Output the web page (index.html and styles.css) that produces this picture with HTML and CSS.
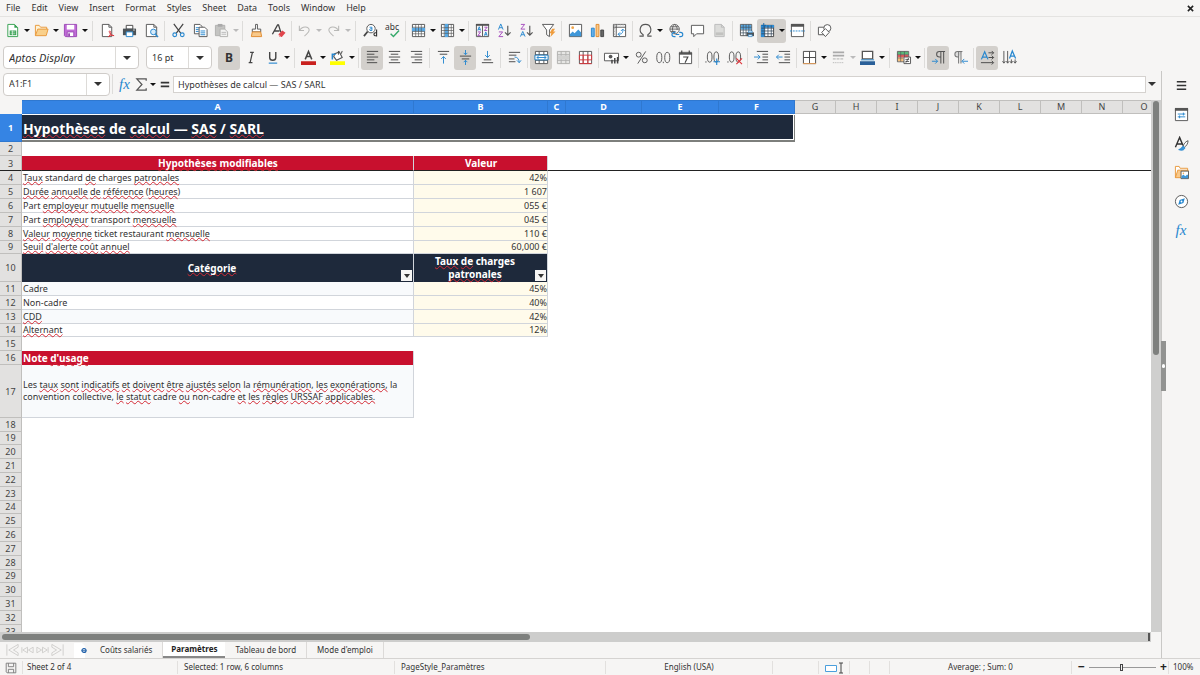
FILE: index.html
```html
<!DOCTYPE html>
<html lang="en">
<head>
<meta charset="utf-8">
<title>Paramètres</title>
<link rel="stylesheet" href="styles.css">
</head>
<body>
<nav class="menubar">
  <button>File</button><button>Edit</button><button>View</button><button>Insert</button><button>Format</button><button>Styles</button><button>Sheet</button><button>Data</button><button>Tools</button><button>Window</button><button>Help</button>
  <button class="close" aria-label="Close document"><svg class="x" viewBox="0 0 8 8"><path d="M1 1l6 6M7 1L1 7" stroke="#222" stroke-width="1.8"/></svg></button>
</nav>

<div class="toolbar top" role="toolbar" aria-label="Standard">
  <button class="tool split" aria-label="New"><svg viewBox="0 0 16 16"><path d="M3 1.500h7l3.500 3.500v9.500H3z" fill="#fff" stroke="#35a050"/><path d="M10 1v4h4" fill="#35a050"/><path d="M5 8h7v5H5z" fill="#35a050"/><path d="M6 9.500h5M6 11.500h5M8 8v5" stroke="#fff" stroke-width=".6"/></svg></button>
  <button class="tool split" aria-label="Open"><svg viewBox="0 0 16 16"><path d="M1.500 13.500v-11h4l1.500 2h6.500v3" fill="#fff3d6" stroke="#e8983a"/><path d="M1.500 13.500l2.500-7h11l-2 7z" fill="#f9d08b" stroke="#e8983a"/></svg></button>
  <button class="tool split" aria-label="Save"><svg viewBox="0 0 16 16"><path d="M1.500 1.500h13v13h-12l-1-1z" fill="#c06bd6" stroke="#9a48b4"/><path d="M4 2h8v5H4z" fill="#fff"/><path d="M4.500 9.500h7v5h-7z" fill="#fff" stroke="#9a48b4"/><path d="M6.500 11v3" stroke="#9a48b4" stroke-width="2"/></svg></button>
  <i class="sep wide"></i>
  <button class="tool" aria-label="Export as PDF"><svg viewBox="0 0 16 16"><path d="M2.500 1.500h7l3 3v10h-10z" fill="#fff" stroke="#555"/><path d="M9.500 1.500v3h3" fill="none" stroke="#555"/><path d="M9 15c3-3 3-6 1.500-6.500S10 13 15 13.500M9 15c1-2 3-2.500 6-1.500" fill="none" stroke="#d9343b"/></svg></button>
  <button class="tool" aria-label="Print"><svg viewBox="0 0 16 16"><path d="M4.500 2.500h7v4h-7z" fill="#fff" stroke="#444"/><path d="M1 6h14v7H1z" fill="#4d5357"/><path d="M4.500 9.500h7v5h-7z" fill="#fff" stroke="#2787cf"/><path d="M12 7.500h1.500" stroke="#fff"/></svg></button>
  <button class="tool" aria-label="Print preview"><svg viewBox="0 0 16 16"><path d="M2.500 1.500h8l3 3v10h-11z" fill="#fff" stroke="#555"/><path d="M10.500 1.500v3h3" fill="none" stroke="#555"/><circle cx="10" cy="9.500" r="3" fill="#d7ebfa" stroke="#2787cf"/><path d="M12 12l3 3" stroke="#2787cf" stroke-width="1.500"/></svg></button>
  <i class="sep"></i>
  <button class="tool" aria-label="Cut"><svg viewBox="0 0 16 16"><path d="M3 1l7.500 10M13 1L5.500 11" stroke="#444" stroke-width="1.300"/><circle cx="4" cy="12.500" r="2" fill="none" stroke="#2787cf" stroke-width="1.200"/><circle cx="12" cy="12.500" r="2" fill="none" stroke="#2787cf" stroke-width="1.200"/></svg></button>
  <button class="tool" aria-label="Copy"><svg viewBox="0 0 16 16"><path d="M1.500 1.500h6l2 2v8h-8z" fill="#fff" stroke="#555"/><path d="M3 5h4M3 7h3M3 9h3" stroke="#2787cf"/><path d="M6.500 4.500h6l2.500 2.500v7.500H6.500z" fill="#fff" stroke="#555"/><path d="M8 8.500h5M8 10.500h5M8 12.500h5" stroke="#2787cf"/></svg></button>
  <button class="tool split off" aria-label="Paste"><svg viewBox="0 0 16 16"><path d="M1.500 2.500h10v11h-10z" fill="#c4c4c2" stroke="#b0b0ae"/><path d="M4 1h5v3H4z" fill="#aaa"/><path d="M6.500 6.500h5l3 3v5h-8z" fill="#f3f3f2" stroke="#b0b0ae"/><path d="M8 10h5M8 12h5" stroke="#bbb"/></svg></button>
  <i class="sep"></i>
  <button class="tool" aria-label="Clone formatting"><svg viewBox="0 0 16 16"><path d="M7 1.500h2v5h3.500v3h-9v-3H7z" fill="#fff" stroke="#555"/><path d="M3.500 9.500h9l1 5h-11z" fill="#f8c98b" stroke="#e08a2c"/></svg></button>
  <button class="tool" aria-label="Clear formatting"><svg viewBox="0 0 16 16"><path d="M1.500 12L7 2h1l2.500 8M3.500 8.500H9" fill="none" stroke="#444" stroke-width="1.400"/><path d="M8 12l4-4 3.500 2.500-4 4.500H9z" fill="#e0454c"/><path d="M8 12l3 3H9z" fill="#f7b5b8"/></svg></button>
  <i class="sep"></i>
  <button class="tool split off" aria-label="Undo"><svg viewBox="0 0 16 16"><path d="M2.500 3v5h5M2.500 8c3-5 10-5 10.500-.5 0 3-3 4-5 6.500" fill="none" stroke="#b8b8b6" stroke-width="1.100"/></svg></button>
  <button class="tool split off" aria-label="Redo"><svg viewBox="0 0 16 16"><path d="M13.500 3v5h-5M13.500 8c-3-5-10-5-10.500-.5 0 3 3 4 5 6.500" fill="none" stroke="#b8b8b6" stroke-width="1.100"/></svg></button>
  <i class="sep wide"></i>
  <button class="tool" aria-label="Find and replace"><svg viewBox="0 0 16 16"><circle cx="8.500" cy="6" r="4.500" fill="#fff" stroke="#555"/><path d="M5 9l-4 5" stroke="#444" stroke-width="1.800"/><path d="M7 4.500h2.500v3.500H7.500c-1-1.500 0-2 2-2" fill="none" stroke="#2787cf"/><path d="M14.500 7v7.500M14.500 10.500c-3.500-1-4 4 0 3" fill="none" stroke="#333" stroke-width="1.200"/></svg></button>
  <button class="tool" aria-label="Spelling"><svg viewBox="0 0 16 16"><text x="0" y="7" class="abc">abc</text><path d="M6 11.500l3 3 6-6.500" fill="none" stroke="#35a96a" stroke-width="1.500"/></svg></button>
  <i class="sep"></i>
  <button class="tool split" aria-label="Row"><svg viewBox="0 0 16 16"><path d="M1.500 1.500h13v13h-13z" fill="#fff" stroke="#555"/><path d="M1 5h14v4H1z" fill="#59a9e4"/><path d="M5 1.500v13M8 1.500v13M11 1.500v13M1.500 11.500h13M1.500 4.500h13M1.500 9h13" stroke="#555" stroke-width=".7"/></svg></button>
  <button class="tool split" aria-label="Column"><svg viewBox="0 0 16 16"><path d="M1.500 1.500h13v13h-13z" fill="#fff" stroke="#555"/><path d="M5 1h4v14H5z" fill="#59a9e4"/><path d="M1.500 5h13M1.500 8h13M1.500 11h13M4.500 1.500v13M9 1.500v13M12 1.500v13" stroke="#555" stroke-width=".7"/></svg></button>
  <i class="sep"></i>
  <button class="tool" aria-label="Sort"><svg viewBox="0 0 16 16"><path d="M1 1h14v2H1z" fill="#444"/><path d="M1.500 1.500h13v13h-13zM8 2v12" fill="#fff" fill-opacity=".1" stroke="#555"/><path d="M3 8l1.500-4L6 8M3.500 7h2M10 13.500l1.500-4 1.500 4M10.500 12.500h2" fill="none" stroke="#2787cf"/><path d="M3 9.500h3l-3 4h3M10 4.500h3l-3 3.500h3" fill="none" stroke="#a44bbd"/></svg></button>
  <button class="tool" aria-label="Sort ascending"><svg viewBox="0 0 16 16"><path d="M1.500 7L4 1l2.500 6M2.500 5h3" fill="none" stroke="#2787cf"/><path d="M2 9.500h4l-4 5h4.500" fill="none" stroke="#a44bbd"/><path d="M11.500 3v10M8.500 10l3 3 3-3" fill="none" stroke="#555" stroke-width="1.200"/></svg></button>
  <button class="tool" aria-label="Sort descending"><svg viewBox="0 0 16 16"><path d="M1.500 14.500L4 9l2.500 5.500M2.500 12.500h3" fill="none" stroke="#2787cf"/><path d="M2 1.500h4l-4 5h4.500" fill="none" stroke="#a44bbd"/><path d="M11.500 3v10M8.500 10l3 3 3-3" fill="none" stroke="#555" stroke-width="1.200"/></svg></button>
  <button class="tool" aria-label="AutoFilter"><svg viewBox="0 0 16 16"><path d="M1.500 1.500h12l-4.500 6v7l-3-2v-5z" fill="#fff" stroke="#555"/><path d="M12 6h3l-2 3h2.500L10 15l1-4H9z" fill="#ef9c3c"/></svg></button>
  <i class="sep"></i>
  <button class="tool" aria-label="Insert image"><svg viewBox="0 0 16 16"><path d="M1.500 1.500h13v13h-13z" fill="#fff" stroke="#555"/><circle cx="5" cy="5" r="1.500" fill="#f0a54a"/><path d="M2 14v-2l3-3 2 2 4-4 3 3v4z" fill="#3f97d9"/></svg></button>
  <button class="tool" aria-label="Insert chart"><svg viewBox="0 0 16 16"><path d="M1.500 5.500h3v9h-3z" fill="#67b0e8" stroke="#2787cf"/><path d="M6.500 1.500h3v13h-3z" fill="#f9c98a" stroke="#e08a2c"/><path d="M11.500 7.500h3v7h-3z" fill="#666" stroke="#444"/></svg></button>
  <button class="tool" aria-label="Pivot table"><svg viewBox="0 0 16 16"><path d="M1.500 1.500h13v13h-13zM4.500 1.500v13M1.500 4.500h13" fill="#fff" stroke="#555"/><path d="M2 2h12M2.500 2v12" stroke="#aaa" stroke-dasharray="2 1"/><path d="M6.500 12c5 0 5-2 5-5M9.500 8.500l2-2 2 2M8.500 10l-2 2 2 2" fill="none" stroke="#2787cf"/></svg></button>
  <i class="sep"></i>
  <button class="tool split" aria-label="Special character"><svg viewBox="0 0 16 16"><path d="M1.500 14h4v-1.500C0 9 2 1.500 8 1.500s8 7.500 2.500 11V14h4" fill="none" stroke="#555" stroke-width="1.200"/></svg></button>
  <button class="tool" aria-label="Hyperlink"><svg viewBox="0 0 16 16"><path d="M7 1.500a5 5 0 1 0 .1 0zM2 6.500h10M3 4h8M3 9h5M7 1.500c-3 3-3 7 0 10M7 1.500c3 3 3 5 2.500 6" fill="none" stroke="#555" stroke-width=".9"/><path d="M8 10H6.500a2 2 0 0 0 0 4.500H8M12 10h1.500a2 2 0 0 1 0 4.500H12M8 12.300h4" fill="none" stroke="#2787cf" stroke-width="1.200"/></svg></button>
  <button class="tool" aria-label="Comment"><svg viewBox="0 0 16 16"><path d="M1.500 2.500h13v9H7l-3 3v-3H1.500z" fill="#fff" stroke="#555"/></svg></button>
  <button class="tool off" aria-label="Headers and footers"><svg viewBox="0 0 16 16"><path d="M3 1.500h7l3 3v10H3z" fill="#dcdcda" stroke="#bbb"/><path d="M4 10h8v3H4z" fill="#c2c2c0"/><path d="M10 1.500v3h3" fill="none" stroke="#bbb"/></svg></button>
  <i class="sep"></i>
  <button class="tool" aria-label="Define print area"><svg viewBox="0 0 16 16"><path d="M1.500 1.500h12v12h-12z" fill="#fff" stroke="#555"/><path d="M2 2h11v5H2z" fill="#59a9e4"/><path d="M4.500 1.500v12M7.500 1.500v12M10.500 1.500v12M1.500 4.500h12M1.500 7.500h12M1.500 10.500h12" stroke="#456" stroke-width=".8"/><path d="M8 10h8v4H8z" fill="#4d5357"/><path d="M10 8.500h4V10h-4zM10 12.500h4v2h-4z" fill="#fff" stroke="#2787cf" stroke-width=".7"/></svg></button>
  <button class="tool split on" aria-label="Freeze rows and columns"><svg viewBox="0 0 16 16"><path d="M1.500 2.500h13v12h-13z" fill="#fff" stroke="#444"/><path d="M1 2h14v3H1zM1 2h4v13H1z" fill="#2f8bd2"/><path d="M5 2.500v12M8.500 2.500v12M12 2.500v12M1.500 5.500h13M1.500 8.500h13M1.500 11.500h13" stroke="#345" stroke-width=".8"/><path d="M4 0v5M1.500 2.500h5" stroke="#1668aa"/></svg></button>
  <button class="tool" aria-label="Split window"><svg viewBox="0 0 16 16"><path d="M1.500 1.500h13v13h-13z" fill="#fff" stroke="#555"/><path d="M1 1h14v3H1z" fill="#555"/><path d="M0 8.500h16" stroke="#2787cf" stroke-dasharray="2 1"/></svg></button>
  <i class="sep"></i>
  <button class="tool" aria-label="Draw functions"><svg viewBox="0 0 16 16"><path d="M1.500 4.500h7v8h-7z" fill="#fff" stroke="#555"/><circle cx="11" cy="5.500" r="3.800" fill="#fff" stroke="#555"/><path d="M9 6l4 4-4 4.500-4-4.500z" fill="#fff" stroke="#555"/></svg></button>
</div>

<div class="toolbar" role="toolbar" aria-label="Formatting">
  <div class="combo font"><input value="Aptos Display" aria-label="Font name"><button aria-label="Choose font"></button></div>
  <div class="combo size"><input value="16 pt" aria-label="Font size"><button aria-label="Choose size"></button></div>
  <button class="tool on" aria-label="Bold"><b class="glyph">B</b></button>
  <button class="tool" aria-label="Italic"><svg viewBox="0 0 16 16"><path d="M6.500 2.500h4M5 13.500h4M9 2.500L6.500 13.500" stroke="#444" stroke-width="1.300"/></svg></button>
  <button class="tool split" aria-label="Underline"><svg viewBox="0 0 16 16"><path d="M5 2v6c0 4 6.500 4 6.500 0V2" fill="none" stroke="#444" stroke-width="1.500"/><path d="M4 14h9" stroke="#2787cf" stroke-width="1.200"/></svg></button>
  <i class="sep wide"></i>
  <button class="tool split" aria-label="Font color"><svg viewBox="0 0 16 16"><path d="M4.500 10L8 1.500 11.500 10M5.500 7h5" fill="none" stroke="#444" stroke-width="1.600"/><path d="M0 12h16v4H0z" fill="#c9211e"/></svg></button>
  <button class="tool split" aria-label="Background color"><svg viewBox="0 0 16 16"><path d="M5 4l5-2 3 6-6 3-3-4z" fill="#fff" stroke="#555" stroke-width="1.200"/><path d="M9 5V1M13 1l-1 3" stroke="#444"/><path d="M2.500 10V4.500H6" fill="none" stroke="#2787cf" stroke-width="1.600"/><path d="M0 12h16v4H0z" fill="#ff0"/></svg></button>
  <i class="sep"></i>
  <button class="tool on" aria-label="Align left"><svg viewBox="0 0 16 16"><path d="M2 1.500h12M2 4.500h8M2 7.500h12M2 10.500h8M2 13.500h11" stroke="#444"/></svg></button>
  <button class="tool" aria-label="Center"><svg viewBox="0 0 16 16"><path d="M2 1.500h12M4 4.500h8M2 7.500h12M4 10.500h8M2 13.500h12" stroke="#444"/></svg></button>
  <button class="tool" aria-label="Align right"><svg viewBox="0 0 16 16"><path d="M2 1.500h12M6 4.500h8M2 7.500h12M6 10.500h8M3 13.500h11" stroke="#444"/></svg></button>
  <i class="sep"></i>
  <button class="tool" aria-label="Align top"><svg viewBox="0 0 16 16"><path d="M2 1.500h12M4 4.500h8" stroke="#444"/><path d="M8 14.500V7M5.500 9.500L8 7l2.500 2.500" fill="none" stroke="#2787cf"/></svg></button>
  <button class="tool on" aria-label="Center vertically"><svg viewBox="0 0 16 16"><path d="M2 6.500h12M4 9.500h8" stroke="#444"/><path d="M8 0v5M6 3l2 2 2-2M8 16v-5M6 13l2-2 2 2" fill="none" stroke="#2787cf"/></svg></button>
  <button class="tool" aria-label="Align bottom"><svg viewBox="0 0 16 16"><path d="M4 10.500h8M2 13.500h12" stroke="#444"/><path d="M8 1v7M5.500 5.500L8 8l2.500-2.500" fill="none" stroke="#2787cf"/></svg></button>
  <i class="sep"></i>
  <button class="tool" aria-label="Wrap text"><svg viewBox="0 0 16 16"><path d="M2 2.500h12M2 5.500h8M2 9.500h6M2 12.500h7" stroke="#444"/><path d="M8 7.500c3 0 5 2 5 6M10.500 11l2.500 2.500 2-2.500" fill="none" stroke="#2787cf"/></svg></button>
  <i class="sep"></i>
  <button class="tool on" aria-label="Merge and center"><svg viewBox="0 0 16 16"><path d="M1.500 1.500h13v13h-13zM1.500 5h13M1.500 11h13M5.500 1.500v13M10.500 1.500v13" fill="#fff" stroke="#555"/><path d="M1 5.500h14v5H1z" fill="#fff" stroke="#1e7fc4"/><path d="M3 8h10M5 6.500L3 8l2 1.500M11 6.500L13 8l-2 1.500" fill="none" stroke="#2787cf"/></svg></button>
  <button class="tool off" aria-label="Merge cells"><svg viewBox="0 0 16 16"><path d="M1.500 1.500h13v13h-13zM1.500 5h13M1.500 11h13M5.500 1.500v13M10.500 1.500v13" fill="#e6e6e4" stroke="#b0b0ae"/><path d="M2 6h12v4H2z" fill="#d2d2d0"/></svg></button>
  <button class="tool" aria-label="Unmerge cells"><svg viewBox="0 0 16 16"><path d="M1.500 1.500h13v13h-13zM5.500 1.500v13M10.500 1.500v13" fill="#fff" stroke="#555"/><path d="M1.500 5.500h13v5h-13zM5.500 5.500v9M10.500 5.500v9M1.500 14.500h13" fill="none" stroke="#d9343b"/></svg></button>
  <i class="sep"></i>
  <button class="tool split" aria-label="Currency"><svg viewBox="0 0 16 16"><path d="M.5 3.500h15v8H.5z" fill="#fff" stroke="#555"/><circle cx="7" cy="7" r="2" fill="#555"/><path d="M8.500 10.500v4M11.500 8.500v6M14.500 7.500v7" stroke="#444" stroke-width="1.600"/></svg></button>
  <button class="tool" aria-label="Percent"><svg viewBox="0 0 16 16"><circle cx="5" cy="5" r="2.600" fill="none" stroke="#555"/><circle cx="11.500" cy="11" r="2.600" fill="none" stroke="#555"/><path d="M12.500 1.500L4 14.500" stroke="#555"/></svg></button>
  <button class="tool" aria-label="Number"><svg viewBox="0 0 16 16"><ellipse cx="3.500" cy="8" rx="2.700" ry="5.500" fill="none" stroke="#555"/><ellipse cx="12" cy="8" rx="2.700" ry="5.500" fill="none" stroke="#555"/><path d="M7.800 12.500v1.500" stroke="#555"/></svg></button>
  <button class="tool" aria-label="Date"><svg viewBox="0 0 16 16"><path d="M1.500 2.500h13v12h-13z" fill="#fff" stroke="#555"/><path d="M1 3h14v2H1z" fill="#555"/><path d="M4 .5v3M12 .5v3M5.500 7.500h5l-3 6" fill="none" stroke="#444" stroke-width="1.200"/></svg></button>
  <i class="sep"></i>
  <button class="tool" aria-label="Add decimal place"><svg viewBox="0 0 16 16"><ellipse cx="5" cy="7.500" rx="2.500" ry="5.500" fill="none" stroke="#555"/><ellipse cx="12" cy="7.500" rx="2.500" ry="5.500" fill="none" stroke="#555"/><path d="M1 12v1.500" stroke="#555"/><path d="M9 12.500h7M12.500 9v7" stroke="#2787cf" stroke-width="1.200"/></svg></button>
  <button class="tool" aria-label="Delete decimal place"><svg viewBox="0 0 16 16"><ellipse cx="5" cy="7.500" rx="2.500" ry="5.500" fill="none" stroke="#555"/><ellipse cx="12" cy="7.500" rx="2.500" ry="5.500" fill="none" stroke="#555"/><path d="M1 12v1.500" stroke="#555"/><path d="M10 9l6 6M16 9l-6 6" stroke="#e0343b" stroke-width="1.200"/></svg></button>
  <i class="sep"></i>
  <button class="tool" aria-label="Increase indent"><svg viewBox="0 0 16 16"><path d="M3 1.500h12M9 4.500h6M9 7.500h6M9 10.500h6M3 13.500h12" stroke="#444"/><path d="M0 7.500h6.500M4 5l2.500 2.500L4 10" fill="none" stroke="#2787cf"/></svg></button>
  <button class="tool" aria-label="Decrease indent"><svg viewBox="0 0 16 16"><path d="M3 1.500h12M9 4.500h6M9 7.500h6M9 10.500h6M3 13.500h12" stroke="#444"/><path d="M7 7.500H.5M3 5L.5 7.500 3 10" fill="none" stroke="#2787cf"/></svg></button>
  <i class="sep"></i>
  <button class="tool split" aria-label="Borders"><svg viewBox="0 0 16 16"><path d="M1.500 1.500h13v13h-13zM8 1.500v13M1.500 8h13" fill="#fff" stroke="#444"/><path d="M1 14.500h14" stroke="#e9a15a"/></svg></button>
  <button class="tool split off" aria-label="Border style"><svg viewBox="0 0 16 16"><path d="M2 2.500h12M2 6h12" stroke="#aaa" stroke-width="2"/><path d="M2 9.500h12" stroke="#aaa" stroke-dasharray="3 1"/><path d="M2 13.500h12" stroke="#aaa" stroke-dasharray="1 1"/></svg></button>
  <button class="tool split" aria-label="Border color"><svg viewBox="0 0 16 16"><path d="M2.500 1.500h11v8h-11z" fill="#fff" stroke="#555" stroke-width="1.400"/><path d="M1 10.500h14" stroke="#2787cf"/><path d="M0 12h16v4H0z" fill="#2a6099"/></svg></button>
  <i class="sep wide"></i>
  <button class="tool split" aria-label="Conditional formatting"><svg viewBox="0 0 16 16"><path d="M1.500 1.500h12v11h-12z" fill="#fff" stroke="#555"/><path d="M2 2h11v3H2z" fill="#58b978"/><path d="M2 5h11v3H2z" fill="#e8595e"/><path d="M2 8h6v4H2z" fill="#f6c07c"/><path d="M5 1.500v11M9 1.500v6M1.500 5h12M1.500 8.500h6" stroke="#555" stroke-width=".7"/><path d="M8.500 7.500h7v7h-7z" fill="#fff" stroke="#555"/><path d="M10 10h4M10 12.200h4M13.500 8.500l-3 5" stroke="#444" stroke-width=".9"/></svg></button>
  <i class="sep"></i>
  <button class="tool on" aria-label="Left to right"><svg viewBox="0 0 16 16"><path d="M10.500 14.500V1.500M13.500 14.500V1.500M15 1.500H9c-4 0-4 6 0 6h1.500" fill="none" stroke="#555" stroke-width="1.100"/><path d="M1 12h6M4.500 9.500L7 12l-2.500 2.500" fill="none" stroke="#2787cf"/></svg></button>
  <button class="tool" aria-label="Right to left"><svg viewBox="0 0 16 16"><path d="M6 14.500V1.500M8.500 14.500V1.500M10 1.500H5c-4 0-4 6 0 6h1" fill="#ddd" stroke="#777" stroke-width="1.100"/><path d="M16 12h-6M12 9.500L9.500 12l2.500 2.500" fill="none" stroke="#2787cf"/></svg></button>
  <i class="sep"></i>
  <button class="tool on" aria-label="Text direction left to right"><svg viewBox="0 0 16 16"><path d="M1.500 10L5 2l3.500 8M3 7.500h4.500" fill="none" stroke="#2787cf" stroke-width="1.300"/><path d="M9 3h5.500M9 8h5.500M1 13.500h13M12.500 1l2 2-2 2M12.500 6l2 2-2 2M12.500 11.500l2 2-2 2" fill="none" stroke="#444"/></svg></button>
  <button class="tool" aria-label="Text direction top to bottom"><svg viewBox="0 0 16 16"><path d="M8 9l3-8 3.500 8M9 6.500h4.500" fill="none" stroke="#2787cf" stroke-width="1.300"/><path d="M2 1v13M6 1v13M10 10v4M14 10v4M.5 12L2 14l1.500-2M4.500 12L6 14l1.500-2M8.500 12l1.500 2 1.500-2M12.500 12l1.500 2 1.500-2" fill="none" stroke="#555"/></svg></button>
</div>

<main class="work">
  <section class="doc">
    <div class="formula">
      <div class="combo name"><input value="A1:F1" aria-label="Name box"><button aria-label="Manage names"></button></div>
      <i class="sep"></i>
      <button class="tool fx" aria-label="Function wizard"><em>fx</em></button>
      <button class="tool split sigma" aria-label="Select function"><svg viewBox="0 0 16 16"><path d="M13 4V2H3l5.500 6L3 14h10v-2" fill="none" stroke="#555" stroke-width="1.300"/></svg></button>
      <button class="tool equals" aria-label="Formula"><svg viewBox="0 0 16 16"><path d="M4 6h9M4 10h9" stroke="#333" stroke-width="1.800"/></svg></button>
      <input class="content" value="Hypothèses de calcul — SAS / SARL" aria-label="Cell content">
      <button class="expand" aria-label="Expand formula bar"></button>
    </div>

    <div class="view">
      <div class="sheet">
        <table>
          <colgroup><col class="w-row"><col class="w-a"><col class="w-b"><col class="w-c"><col class="w-d"><col class="w-e"><col class="w-d"><col class="w"><col class="w"><col class="w"><col class="w"><col class="w"><col class="w"><col class="w"><col class="w"></colgroup>
          <thead><tr><th class="corner"></th><th class="sel">A</th><th class="sel">B</th><th class="sel">C</th><th class="sel">D</th><th class="sel">E</th><th class="sel">F</th><th>G</th><th>H</th><th>I</th><th>J</th><th>K</th><th>L</th><th>M</th><th>N</th><th>O</th></tr></thead>
          <tbody>
            <tr class="r-title"><th class="sel">1</th><td colspan="6" class="title"><span class="sp">Hypothèses</span> de <span class="sp">calcul</span> — <span class="sp">SAS</span> / <span class="sp">SARL</span></td><td colspan="9"></td></tr>
            <tr><th>2</th><td colspan="15"></td></tr>
            <tr class="frozen"><th>3</th><td class="red mid"><span class="sp">Hypothèses</span> <span class="sp">modifiables</span></td><td class="red mid">Valeur</td><td colspan="13"></td></tr>
            <tr><th>4</th><td class="c"><span class="sp">Taux</span> standard <span class="sp">de</span> charges <span class="sp">patronales</span></td><td class="v">42%</td></tr>
            <tr><th>5</th><td class="c"><span class="sp">Durée</span> <span class="sp">annuelle</span> <span class="sp">de</span> <span class="sp">référence</span> (<span class="sp">heures</span>)</td><td class="v">1 607</td></tr>
            <tr><th>6</th><td class="c">Part <span class="sp">employeur</span> <span class="sp">mutuelle</span> <span class="sp">mensuelle</span></td><td class="v">055 €</td></tr>
            <tr><th>7</th><td class="c">Part <span class="sp">employeur</span> transport <span class="sp">mensuelle</span></td><td class="v">045 €</td></tr>
            <tr><th>8</th><td class="c"><span class="sp">Valeur</span> <span class="sp">moyenne</span> ticket restaurant <span class="sp">mensuelle</span></td><td class="v">110 €</td></tr>
            <tr class="short"><th>9</th><td class="c"><span class="sp">Seuil</span> <span class="sp">d'alerte</span> <span class="sp">coût</span> <span class="sp">annuel</span></td><td class="v">60,000 €</td></tr>
            <tr class="r-head"><th>10</th><td class="navy mid"><span class="sp">Catégorie</span><button class="filter" aria-label="Filter Catégorie"></button></td><td class="navy mid"><span class="sp">Taux</span> <span class="sp">de</span> charges <span class="sp">patronales</span><button class="filter" aria-label="Filter Taux"></button></td></tr>
            <tr><th>11</th><td class="c tint">Cadre</td><td class="v">45%</td></tr>
            <tr><th>12</th><td class="c">Non-cadre</td><td class="v">40%</td></tr>
            <tr><th>13</th><td class="c tint"><span class="sp">CDD</span></td><td class="v">42%</td></tr>
            <tr class="short"><th>14</th><td class="c"><span class="sp">Alternant</span></td><td class="v">12%</td></tr>
            <tr><th>15</th><td></td></tr>
            <tr><th>16</th><td class="red">Note <span class="sp">d'usage</span></td></tr>
            <tr class="r-note"><th>17</th><td class="c tint note">Les <span class="sp">taux</span> <span class="sp">sont</span> <span class="sp">indicatifs</span> <span class="sp">et</span> <span class="sp">doivent</span> <span class="sp">être</span> <span class="sp">ajustés</span> <span class="sp">selon</span> la <span class="sp">rémunération</span>, <span class="sp">les</span> <span class="sp">exonérations,</span> la convention collective, <span class="sp">le</span> <span class="sp">statut</span> cadre <span class="sp">ou</span> non-cadre <span class="sp">et</span> <span class="sp">les</span> <span class="sp">règles</span> <span class="sp">URSSAF</span> <span class="sp">applicables.</span></td></tr>
            <tr><th>18</th><td></td></tr>
            <tr class="short"><th>19</th><td></td></tr>
            <tr><th>20</th><td></td></tr>
            <tr><th>21</th><td></td></tr>
            <tr><th>22</th><td></td></tr>
            <tr><th>23</th><td></td></tr>
            <tr class="short"><th>24</th><td></td></tr>
            <tr><th>25</th><td></td></tr>
            <tr><th>26</th><td></td></tr>
            <tr><th>27</th><td></td></tr>
            <tr><th>28</th><td></td></tr>
            <tr class="short"><th>29</th><td></td></tr>
            <tr><th>30</th><td></td></tr>
            <tr><th>31</th><td></td></tr>
            <tr><th>32</th><td></td></tr>
            <tr><th>33</th><td></td></tr>
          </tbody>
        </table>
      </div>
      <div class="vscroll"><div class="thumb"></div></div>
    </div>
    <div class="hscroll"><div class="track"><div class="thumb"></div><i class="grip"></i></div></div>

    <div class="tabs">
      <div class="nav">
        <button aria-label="First sheet"><svg viewBox="0 0 16 12"><path d="M2 0v12M14 0L4 6l10 6V9L9 6l5-3z" /></svg></button>
        <button aria-label="Previous sheet"><svg viewBox="0 0 16 12"><path d="M2 3v6M8 3L3 6l5 3zM14 3L9 6l5 3z"/></svg></button>
        <button aria-label="Next sheet"><svg viewBox="0 0 16 12"><path d="M14 3v6M2 3l5 3-5 3zM8 3l5 3-5 3z"/></svg></button>
        <button aria-label="Last sheet"><svg viewBox="0 0 16 12"><path d="M14 0v12M2 0l10 6-10 6V9l5-3-5-3z"/></svg></button>
      </div>
      <button class="add" aria-label="Add sheet"><svg viewBox="0 0 14 15"><path d="M0 0h8l3 3v12H0z" fill="#fff"/><circle cx="10" cy="7.500" r="2" fill="#fff" stroke="#1f5fa8" stroke-width="1.200"/><path d="M10 5v5M7.500 7.500h5" stroke="#1f5fa8" stroke-width=".6"/></svg></button>
      <button class="tab">Coûts salariés</button><button class="tab active">Paramètres</button><button class="tab">Tableau de bord</button><button class="tab">Mode d'emploi</button>
    </div>
  </section>

  <aside class="side">
    <button class="collapse" aria-label="Hide sidebar"></button>
    <button aria-label="Sidebar settings"><svg viewBox="0 0 16 16"><path d="M3 4h10M3 8h10M3 12h10" stroke="#333" stroke-width="1.400"/></svg></button>
    <button aria-label="Properties"><svg viewBox="0 0 16 16"><path d="M1.500 2h13v12.500h-13z" fill="#fff" stroke="#555"/><path d="M1 1h14v3H1z" fill="#555"/><path d="M4 7.500h8M4 10.500h8" stroke="#2787cf"/><path d="M10 6v3M6 9v3" stroke="#2787cf"/></svg></button>
    <button aria-label="Styles"><svg viewBox="0 0 16 16"><path d="M1.500 12L6 1.500 9.500 10M3 8.500h6" fill="none" stroke="#333" stroke-width="1.500"/><path d="M15 5c-3 1-5 4-5 6l1 1c2-1 4-4 4-7z" fill="#fff" stroke="#555"/><path d="M10 11c-2 0-1.500 3-5 3.500 4 1.500 6.500 0 6.500-2z" fill="#3f97d9" stroke="#2787cf"/></svg></button>
    <button aria-label="Gallery"><svg viewBox="0 0 16 16"><path d="M1.500 13.500v-12h4l1 2h8v3" fill="#fff" stroke="#e8983a"/><path d="M1.500 13.500L4 5.500h11v8z" fill="#f9c98a" stroke="#e8983a"/><path d="M7.500 6.500h8v8h-8z" fill="#fff" stroke="#555"/><path d="M8 14v-2l2-2 2 2 2-2 1 1v3z" fill="#3f97d9"/><circle cx="10" cy="8.700" r=".8" fill="#f0a54a"/></svg></button>
    <button aria-label="Navigator"><svg viewBox="0 0 16 16"><circle cx="8" cy="8" r="6.500" fill="#fff" stroke="#555"/><path d="M11.500 4.500L10 9.500l-5.500 2L6 6.500z" fill="#2787cf"/><circle cx="8" cy="8" r="1" fill="#fff"/></svg></button>
    <button class="fx" aria-label="Functions"><em>fx</em></button>
  </aside>
</main>

<footer class="status">
  <div class="disk"><svg viewBox="0 0 16 16"><path d="M2.500 2.500h11v11h-10l-1-1zM5 2.500v4h6v-4M5 13.500v-4h6v4" fill="none" stroke="#777"/></svg></div>
  <div>Sheet 2 of 4</div>
  <div>Selected: 1 row, 6 columns</div>
  <div>PageStyle_Paramètres</div>
  <div class="center">English (USA)</div>
  <div></div>
  <div class="modes"><svg viewBox="0 0 24 14"><path d="M2.500 4.500h11v6h-11z" fill="#fff" stroke="#4a9fdc"/><path d="M16 2h4M18 2v10M16 12h4" stroke="#444"/></svg></div>
  <div></div>
  <div></div>
  <div class="center">Average: ; Sum: 0</div>
  <div class="zoom"><button aria-label="Zoom out">−</button><input type="range" min="0" max="100" value="49" aria-label="Zoom"><button aria-label="Zoom in">+</button></div>
  <div class="pct">100%</div>
</footer>
</body>
</html>
```
FILE: styles.css
```css
* { box-sizing: border-box; }
html, body { height: 100%; margin: 0; }
body {
  display: flex; flex-direction: column; overflow: hidden;
  background: #f6f5f4; color: #333;
  font: 9px/12px "Noto Sans", "Open Sans", sans-serif;
}
button, input { font: inherit; color: inherit; margin: 0; padding: 0; border: 0; background: none; }
svg { display: block; width: 16px; height: 16px; }

.menubar { display: flex; align-items: center; gap: 11px; height: 17px; padding: 0 6px; border-bottom: 1px solid #e4e3e1; }
.close { margin-left: auto; }
.x { width: 7px; height: 7px; }

.toolbar { display: flex; align-items: center; height: 27px; padding-left: 2px; }
.tool { flex: none; display: flex; align-items: center; justify-content: center; width: 22px; height: 24px; border-radius: 3px; }
.tool.split { width: 29px; justify-content: flex-start; padding-left: 3px; gap: 4px; }
.tool.split::after { content: ""; border: 3px solid transparent; border-top-color: #111; border-bottom: 0; }
.tool.split.off::after { border-top-color: #bbb; }
.tool.on { background: #d3d0cc; }
.top svg, .toolbar svg { width: 15px; height: 15px; overflow: visible; }
.abc { font: 9px "Noto Sans", sans-serif; fill: #333; }
.glyph { font: bold 12px/16px "Noto Sans", sans-serif; }
.sep { flex: none; width: 5px; height: 20px; background: linear-gradient(#dddcda, #dddcda) center / 1px 100% no-repeat; }
.sep.wide { width: 7px; }

.combo { flex: none; display: flex; height: 23px; background: #fff; border: 1px solid #cfccc9; border-radius: 4px; }
.combo input { flex: 1; min-width: 0; padding-left: 5px; }
.combo button { width: 23px; border-left: 1px solid #dddbd8; display: flex; align-items: center; justify-content: center; }
.combo button::after, .expand::after { content: ""; border: 4px solid transparent; border-top-color: #333; border-bottom: 0; }
.font { width: 136px; margin: 0 7px 0 1px; }
.font input { font-style: italic; font-size: 11px; }
.size { width: 66px; margin-right: 6px; }
.name { width: 107px; }

.work { flex: 1; min-height: 0; display: flex; }
.doc { flex: 1; min-width: 0; display: flex; flex-direction: column; }
.formula { display: flex; align-items: center; height: 26px; margin-bottom: 3px; padding-left: 3px; }
.fx em { font: italic 15px/16px "Liberation Serif", serif; color: #2787cf; }
.formula .tool { width: 19px; }
.formula .sigma { width: 22px; padding-left: 0; gap: 1px; }
.formula .equals { width: 17px; }
.formula svg { width: 15px; height: 15px; }
.content { flex: 1; min-width: 0; height: 17px; padding-left: 4px; background: #fff; border: 1px solid #d5d2cf; }
.expand { width: 15px; padding-left: 2px; display: flex; align-items: center; }

.view { flex: 1; min-height: 0; display: flex; }
.sheet { flex: 1; min-width: 0; overflow: hidden; background: #fff; }
table { table-layout: fixed; width: 1166px; border-collapse: separate; border-spacing: 0; }
.w-row { width: 22px; }
.w-a { width: 392px; }
.w-b { width: 134px; }
.w-c { width: 18px; }
.w-d { width: 76px; }
.w-e { width: 77px; }
.w { width: 41px; }
tr { height: 14px; }
tr.short { height: 13px; }
.short > * { line-height: 12px; }
.frozen { height: 15px; }
.r-title, .r-head { height: 28px; }
.r-note { height: 53px; }
th, td { padding: 0; line-height: 13px; vertical-align: middle; }
th { font-weight: normal; color: #444; background: #e2e1e0; border-right: 1px solid #c0bfbd; border-bottom: 1px solid #c0bfbd; }
thead th { border-top: 1px solid #c0bfbd; line-height: 12px; }
th.corner { background: #f6f5f4; border-color: #f6f5f4; }
th.sel { background: #3584e4; border-color: #2f78d0; color: #fff; font-weight: bold; }
.title {
  padding-left: 1px; background: #1e293b; color: #fff; font-size: 14px; line-height: 20px; font-weight: bold;
  border-top: 1px solid #fff;
  box-shadow: inset -1px -2px 0 #7d7f7c, inset -2px -3px 0 #fff;
}
.c { padding-left: 1px; border-right: 1px solid #d1d5db; border-bottom: 1px solid #d1d5db; }
.v { text-align: right; background: #fffbeb; border-right: 1px solid #d1d5db; border-bottom: 1px solid #d1d5db; }
.tint { background: #f8fafc; }
.red, .navy { position: relative; padding-left: 1px; color: #fff; font-size: 10px; font-weight: bold; border-right: 1px solid #d1d5db; }
.red { background: #c8102e; }
.navy { background: #1e293b; padding-right: 12px; }
.mid { text-align: center; }
.frozen > * { border-bottom: 1px solid #222; }
.note { line-height: 12px; padding-right: 8px; }
.sp { text-decoration: underline wavy #d42a35 1px; text-decoration-skip-ink: none; text-underline-offset: 0; }
.filter { position: absolute; right: 1px; bottom: 1px; width: 11px; height: 11px; background: #f6f5f4; display: flex; align-items: center; justify-content: center; }
.filter::after { content: ""; border: 3px solid transparent; border-top: 4px solid #333; border-bottom: 0; }

.vscroll { width: 10px; padding: 1px 2px; background: #cfcfce; }
.thumb { background: #7e807e; border-radius: 3px; }
.vscroll .thumb { height: 48%; }
.hscroll { padding-right: 10px; }
.track { display: flex; align-items: center; justify-content: space-between; height: 10px; padding: 0 1px 0 2px; background: #cdcdcc; }
.track .thumb { width: 46%; height: 6px; }
.grip { width: 2px; height: 8px; background: #555; }

.tabs { display: flex; height: 16px; align-items: stretch; font-size: 8px; }
.nav { display: flex; align-items: center; padding-left: 5px; width: 74px; }
.nav button { width: 15px; }
.nav svg { width: 15px; height: 12px; fill: none; stroke: #cfcecc; }
.add { width: 14px; margin-right: 2px; }
.add svg { width: 14px; height: 15px; }
.tab { padding: 0 10px; border-right: 1px solid #dcdad8; color: #333; }
.tab.active { padding: 0 8px; background: #fff; font-weight: bold; color: #222; border-right: 0; border-bottom: 2px solid #888; }

.side { position: relative; display: flex; flex-direction: column; align-items: center; gap: 7px; width: 39px; padding-top: 3px; border-left: 1px solid #c9c8c6; }
.side button { display: flex; align-items: center; justify-content: center; height: 22px; width: 22px; }
.side svg { width: 15px; height: 15px; }
.side .collapse { position: absolute; left: -1px; top: 46%; width: 5px; height: 50px; background: #929391; }
.collapse::after { content: ""; width: 3px; height: 4px; background: #fff; border-radius: 2px; }

.status {
  display: grid; align-items: center; height: 17px; border-top: 1px solid #d5d3d1; font-size: 8px;
  grid-template-columns: 22px 155fr 217fr 211fr 167fr 46fr 31px 20px 20px 182fr 97px 32px;
}
.status > div { height: 13px; padding-left: 6px; border-left: 1px solid #e2e0de; white-space: nowrap; }
.status .disk { padding-left: 4px; border: 0; }
.disk svg { width: 14px; height: 14px; }
.status .disk + div { padding-left: 4px; }
.status .center { padding: 0; text-align: center; }
.status .modes { padding-left: 4px; }
.modes svg { width: 24px; height: 14px; }
.status .zoom { display: flex; align-items: center; padding-left: 5px; gap: 3px; }
.zoom button { width: 9px; font-weight: bold; font-size: 12px; color: #222; }
.zoom input { appearance: none; flex: 1; min-width: 0; height: 10px; background: linear-gradient(#999, #999) center / 100% 1px no-repeat; }
.zoom input::-webkit-slider-thumb { appearance: none; width: 3px; height: 7px; background: #f6f5f4; border: 1px solid #444; }
.status .pct { padding-left: 4px; }
```
